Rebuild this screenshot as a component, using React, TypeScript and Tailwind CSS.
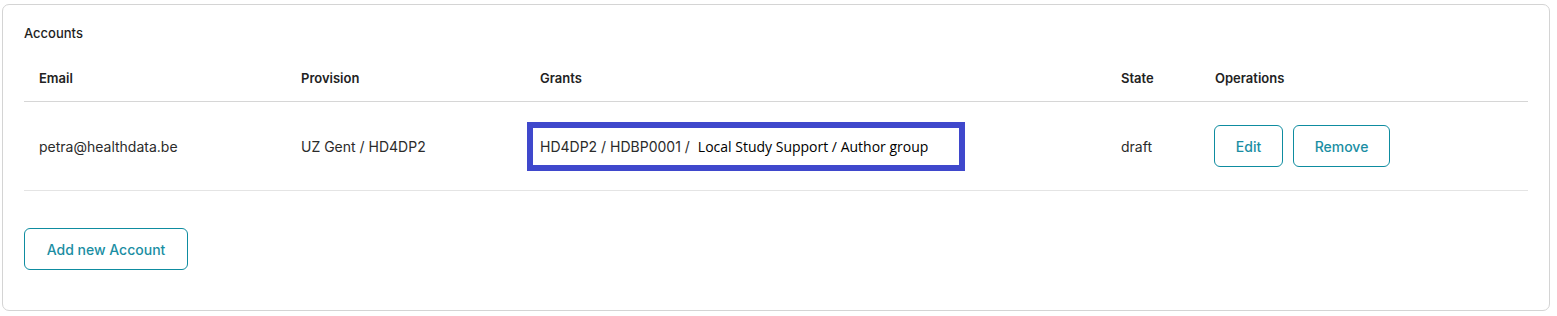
import React from "react";

export default function App() {
  return (
    <div className="w-[1557px] h-[316px] bg-white pt-[4px] pl-[2px]" style={{ fontFamily: "Inter, 'Liberation Sans', sans-serif" }}>
      <div className="w-[1548px] h-[307px] border border-[#d4d4d4] rounded-[7px] pl-[21px] pr-[20px] pt-[21px]">
        <div className="text-[13px] font-medium text-[#1f1f1f] leading-[14px]">Accounts</div>
        <div className="mt-[17px] w-[1504px]">
          <div className="grid grid-cols-[262px_239px_581px_94px_1fr] h-[45px] items-start border-b border-[#d6d6d6] text-[13px] font-semibold text-[#222]">
            <div className="pl-[15px] pt-[12px]">Email</div>
            <div className="pl-[15px] pt-[12px]">Provision</div>
            <div className="pl-[15px] pt-[12px]">Grants</div>
            <div className="pl-[15px] pt-[12px]">State</div>
            <div className="pl-[15px] pt-[12px]">Operations</div>
          </div>
          <div className="grid grid-cols-[262px_239px_581px_94px_1fr] h-[89px] items-center border-b border-[#e4e4e4] text-[14px] text-[#2b2b2b]">
            <div className="pl-[15px]">petra@healthdata.be</div>
            <div className="pl-[15px]">UZ Gent / HD4DP2</div>
            <div className="pl-[2px]">
              <div className="w-[438px] h-[49px] border-[6px] border-[#3f48cc] flex items-center pl-[7px]">
                <span className="text-[14px] text-[#2b2b2b]">HD4DP2 / HDBP0001 /</span>
                <span className="ml-[8px] text-[14px] text-black" style={{ fontFamily: "'Open Sans', 'Noto Sans', sans-serif" }}>Local Study Support / Author group</span>
              </div>
            </div>
            <div className="pl-[15px]">draft</div>
            <div className="pl-[14px] flex gap-[10px]">
              <button className="h-[42px] w-[69px] rounded-[6px] border border-[#0e8ca0] text-[#1a8ea3] text-[14px] font-medium">Edit</button>
              <button className="h-[42px] w-[97px] rounded-[6px] border border-[#0e8ca0] text-[#1a8ea3] text-[14px] font-medium">Remove</button>
            </div>
          </div>
        </div>
        <button className="mt-[37px] h-[42px] w-[164px] rounded-[6px] border border-[#0e8ca0] text-[#1a8ea3] text-[14px] font-medium">Add new Account</button>
      </div>
    </div>
  );
}
